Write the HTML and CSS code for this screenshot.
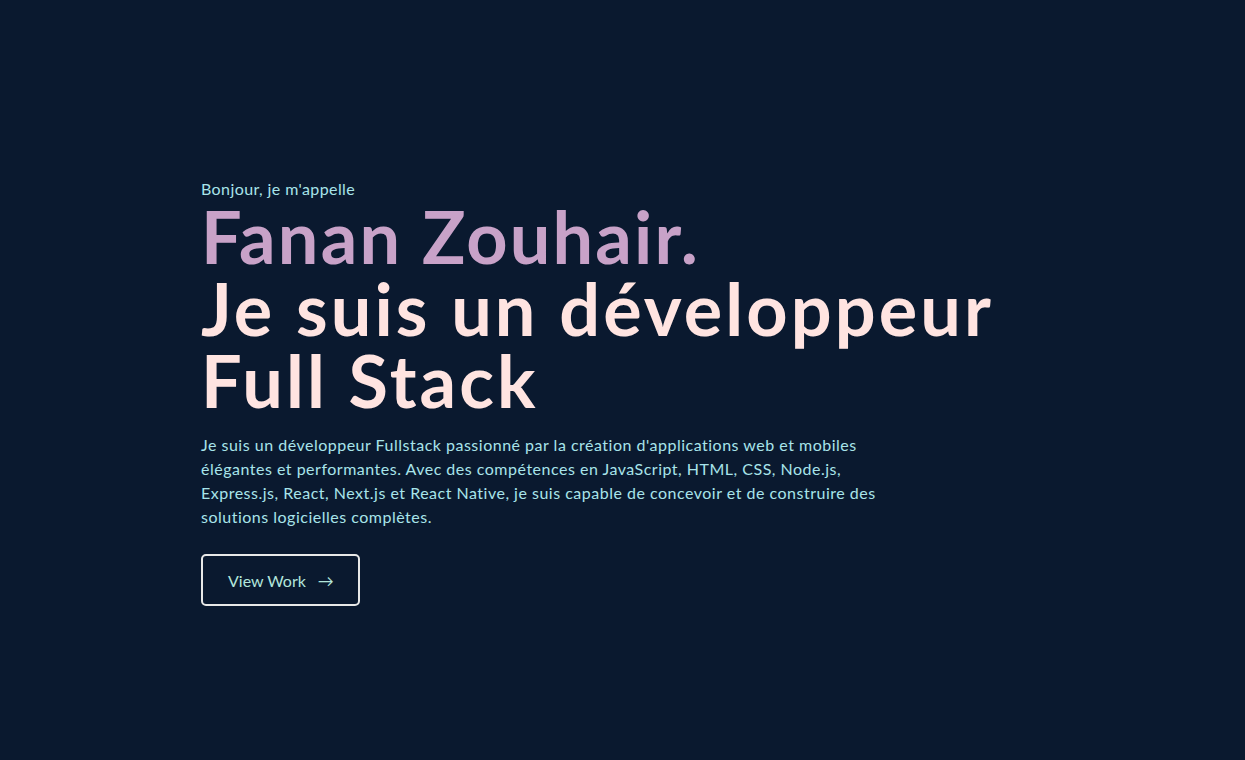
FILE: index.html
```html
<!DOCTYPE html>
<html lang="fr">
<head>
<meta charset="utf-8">
<title>Fanan Zouhair</title>
<link rel="stylesheet" href="styles.css">
</head>
<body>
<main class="hero">
  <p class="hello">Bonjour, je m'appelle</p>
  <h1 class="title">
    <span class="name">Fanan Zouhair.</span>
    <span class="role">Je suis un développeur Full Stack</span>
  </h1>
  <p class="intro">Je suis un développeur Fullstack passionné par la création d'applications web et mobiles élégantes et performantes. Avec des compétences en JavaScript, HTML, CSS, Node.js, Express.js, React, Next.js et React Native, je suis capable de concevoir et de construire des solutions logicielles complètes.</p>
  <a class="btn" href="#work">View Work <span class="arrow">→</span></a>
</main>
</body>
</html>
```

FILE: styles.css
```css
html, body {
  margin: 0;
  padding: 0;
  background: #0a192f;
  height: 100%;
}
body {
  font-family: "Lato", "Open Sans", sans-serif;
}
.hero {
  display: flex;
  flex-direction: column;
  align-items: flex-start;
  padding: 178px 0 0 201px;
  box-sizing: border-box;
}
.hello {
  margin: 0;
  color: #a8e4ea;
  font-size: 16px;
  line-height: 22px;
  letter-spacing: 0.4px;
}
.title {
  margin: 0;
  font-weight: 700;
  font-size: 72px;
  line-height: 72px;
  width: 880px;
}
.name {
  display: block;
  color: #c8a2c8;
  letter-spacing: 2.2px;
}
.role {
  display: block;
  color: #ffe4e1;
  letter-spacing: 3.1px;
}
.intro {
  margin: 17px 0 0;
  width: 680px;
  color: #a8e4ea;
  font-size: 16px;
  line-height: 24px;
  letter-spacing: 0.5px;
}
.btn {
  margin-top: 25px;
  display: inline-flex;
  align-items: center;
  gap: 12px;
  height: 52px;
  box-sizing: border-box;
  padding: 0 24px 0 25px;
  border: 2px solid #e8e8e8;
  border-radius: 5px;
  color: #b2e6dc;
  font-size: 16px;
  text-decoration: none;
}
.arrow {
  font-size: 16px;
}
```
